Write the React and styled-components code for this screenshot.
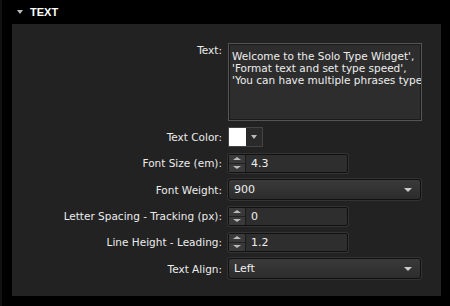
import React from 'react';
import styled, { createGlobalStyle } from 'styled-components';

const Global = createGlobalStyle`
  html, body { margin: 0; padding: 0; background: #000; }
  body { font-family: "DejaVu Sans", "Liberation Sans", sans-serif; }
`;

const Page = styled.div`
  width: 450px;
  height: 306px;
  background: #000;
  padding: 0 9px 0 10px;
  box-sizing: border-box;
  border-left: 2px solid #111;
`;

const Header = styled.div`
  display: flex;
  align-items: center;
  height: 24px;
  padding-left: 5px;
  color: #fff;
  font-family: "Liberation Sans", Arial, sans-serif;
  font-weight: bold;
  font-size: 11px;
`;

const Caret = styled.span`
  width: 0;
  height: 0;
  border-left: 3px solid transparent;
  border-right: 3px solid transparent;
  border-top: 4px solid #bbb;
  margin-right: 7px;
`;

const Panel = styled.div`
  background: #222;
  height: 272px;
  box-sizing: border-box;
  padding: 19px 0 0;
  display: flex;
  flex-direction: column;
  gap: 6px;
`;

const Row = styled.div`
  display: grid;
  grid-template-columns: 210px 1fr;
  column-gap: 6px;
  align-items: ${p => (p.$top ? 'start' : 'center')};
  min-height: ${p => p.$h || 20}px;
`;

const Label = styled.label`
  text-align: right;
  color: #ececec;
  font-size: 10.5px;
  padding-top: ${p => (p.$top ? '1px' : '0')};
`;

const TextArea = styled.div`
  width: 194px;
  height: 78px;
  box-sizing: border-box;
  background: #2d2d2d;
  border: 1px solid #555;
  box-shadow: inset 0 0 0 1px #1a1a1a;
  color: #eee;
  font-size: 10.5px;
  line-height: 12px;
  padding: 6px 3px;
  white-space: pre;
  overflow: hidden;
`;

const Swatch = styled.div`
  display: flex;
  width: 35px;
  height: 20px;
  box-sizing: border-box;
  border: 1px solid #444;
  background: #2a2a2a;
`;

const SwatchColor = styled.div`
  width: 17px;
  background: #fff;
`;

const SwatchArrow = styled.div`
  flex: 1;
  display: flex;
  align-items: center;
  justify-content: center;
  &::after {
    content: '';
    border-left: 3px solid transparent;
    border-right: 3px solid transparent;
    border-top: 4px solid #bbb;
  }
`;

const NumberBox = styled.div`
  display: flex;
  width: 120px;
  height: 19px;
  box-sizing: border-box;
  border: 1px solid #111;
  border-radius: 2px;
  background: #2e2e2e;
  box-shadow: 0 0 0 1px #333;
`;

const Spinner = styled.div`
  width: 16px;
  display: flex;
  flex-direction: column;
  border-right: 1px solid #1a1a1a;
  background: #3a3a3a;
`;

const SpinHalf = styled.div`
  flex: 1;
  display: flex;
  align-items: center;
  justify-content: center;
  border-top: ${p => (p.$down ? '1px solid #222' : 'none')};
  &::after {
    content: '';
    border-left: 4px solid transparent;
    border-right: 4px solid transparent;
    ${p => (p.$down ? 'border-top: 3px solid #bbb;' : 'border-bottom: 3px solid #bbb;')}
  }
`;

const Value = styled.span`
  color: #eee;
  font-size: 11px;
  padding-left: 5px;
  line-height: 17px;
`;

const Select = styled.div`
  display: flex;
  align-items: center;
  justify-content: space-between;
  width: 193px;
  height: 21px;
  box-sizing: border-box;
  border: 1px solid #111;
  border-radius: 3px;
  background: linear-gradient(#3a3a3a, #2c2c2c);
  box-shadow: 0 0 0 1px #333;
  color: #eee;
  font-size: 11px;
  padding: 0 8px 0 5px;
  &::after {
    content: '';
    border-left: 4px solid transparent;
    border-right: 4px solid transparent;
    border-top: 4px solid #ccc;
  }
`;

const phrases = "Welcome to the Solo Type Widget',\n'Format text and set type speed',\n'You can have multiple phrases type";

const NumberField = ({ value }) => (
  <NumberBox>
    <Spinner>
      <SpinHalf />
      <SpinHalf $down />
    </Spinner>
    <Value>{value}</Value>
  </NumberBox>
);

const App = () => (
  <>
    <Global />
    <Page>
      <Header>
        <Caret />
        TEXT
      </Header>
      <Panel>
        <Row $top $h={78}>
          <Label $top>Text:</Label>
          <TextArea>{phrases}</TextArea>
        </Row>
        <Row>
          <Label>Text Color:</Label>
          <Swatch>
            <SwatchColor />
            <SwatchArrow />
          </Swatch>
        </Row>
        <Row>
          <Label>Font Size (em):</Label>
          <NumberField value="4.3" />
        </Row>
        <Row>
          <Label>Font Weight:</Label>
          <Select>900</Select>
        </Row>
        <Row>
          <Label>Letter Spacing - Tracking (px):</Label>
          <NumberField value="0" />
        </Row>
        <Row>
          <Label>Line Height - Leading:</Label>
          <NumberField value="1.2" />
        </Row>
        <Row>
          <Label>Text Align:</Label>
          <Select>Left</Select>
        </Row>
      </Panel>
    </Page>
  </>
);

export default App;
